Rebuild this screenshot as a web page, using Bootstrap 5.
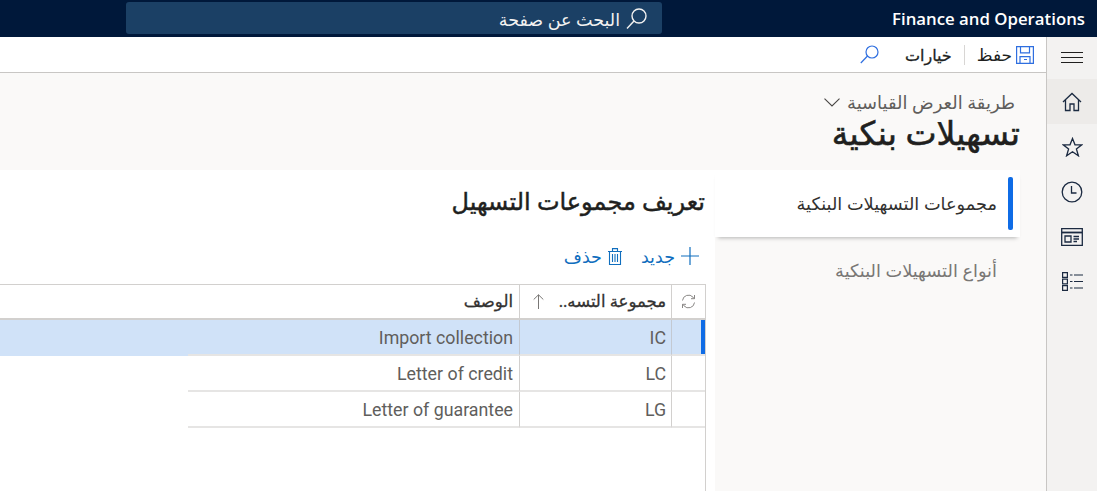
<!DOCTYPE html>
<html lang="ar" dir="rtl">
<head>
    <meta charset="UTF-8">
    <meta name="viewport" content="width=device-width, initial-scale=1.0">
    <title>تسهيلات بنكية</title>
    <link href="https://cdn.jsdelivr.net/npm/bootstrap@5.3.0/dist/css/bootstrap.min.css" rel="stylesheet">
    <style>
        html, body { height: 491px; overflow: hidden; }
        body { font-family: "Open Sans", "DejaVu Sans", sans-serif; font-size: 14px; color: #323130; background: #fff; }
        svg { display: block; flex: none; }

        .top-bar { height: 37px; background: #00183a; color: #fff; }
        .brand-box { width: 435px; padding-right: 12px; font-weight: 600; font-size: 16.8px; line-height: 37px; flex: none; text-align: right; }
        .search-box { width: 536px; height: 32px; margin-top: 2px; background: #1b4065; border-radius: 3px; padding-right: 15px; gap: 6px; font-size: 17.5px; color: #f3f2f1; }
        .search-box span { padding-top: 2px; }

        .app-body { height: 454px; }
        .side-rail { width: 51px; flex: none; background: #f3f2f1; border-left: 1px solid #c8c6c4; }
        .rail-item { height: 45px; }
        .rail-first { height: 42px; }
        .rail-on { background: #edebe9; }

        .work-area { min-width: 0; background: #faf9f8; }
        .tool-bar { height: 36px; background: #fff; border-bottom: 1px solid #c8c6c4; padding-right: 12px; font-size: 17px; }
        .tool-item { gap: 4px; color: #201f1e; }
        .tool-sep { width: 1px; height: 20px; background: #d8d6d4; margin: 0 12px; }
        .tool-strong { font-size: 16px; color: #201f1e; -webkit-text-stroke: .3px #201f1e; }
        .tool-find { margin-right: 26px; }

        .page-head { height: 97px; padding: 16px 31px 0 0; }
        .view-name { font-size: 17.9px; line-height: 26px; color: #605e5c; gap: 7px; }
        .page-title { font-size: 33px; font-weight: 400; -webkit-text-stroke: .6px #201f1e; line-height: 36px; margin: 0 -5px 0 0; color: #201f1e; }

        .tabs-wrap { height: 321px; margin-right: 26px; }
        .tab-col { width: 305px; flex: none; }
        .tab-link { height: 67px; line-height: 67px; padding-right: 23px; font-size: 17.75px; color: #797775; position: relative; }
        .tab-on { background: #fff; color: #323130; box-shadow: 0 4px 4px -3px rgba(0,0,0,.28); }
        .tab-on::before { content: ""; position: absolute; right: 7px; top: 7px; bottom: 7px; width: 5px; background: #0f6ce6; border-radius: 2px; }
        .tab-off { height: 66px; line-height: 66px; }

        .tab-body { min-width: 0; background: #fff; }
        .body-title { font-size: 24px; font-weight: 400; -webkit-text-stroke: .45px #201f1e; line-height: 30px; padding: 16px 10px 0 0; margin: 0; color: #201f1e; }
        .action-bar { height: 38px; margin-top: 21px; padding-right: 16px; color: #106ebe; font-size: 17.5px; }
        .action-item { gap: 6px; }
        .action-del { margin-right: 19px; }

        .data-grid { margin-right: 9px; margin-top: 9px; height: 207px; border-right: 1px solid #d2d0ce; border-top: 1px solid #d2d0ce; overflow: hidden; }
        .grid-row { height: 36px; }
        .grid-head { height: 35px; border-bottom: 2px solid #d2d0ce; font-size: 16.5px; -webkit-text-stroke: .3px #323130; color: #323130; }
        .cell-sel { width: 34px; flex: none; border-left: 1px solid #d2d0ce; position: relative; }
        .cell-code { width: 152px; flex: none; border-left: 1px solid #d2d0ce; padding: 0 5px 0 7px; }
        .cell-desc { width: 331px; flex: none; padding: 0 6px; }
        .cell-fill { flex: 1 1 auto; }
        .row-line .cell-sel, .row-line .cell-code, .row-line .cell-desc { border-bottom: 2px solid #e6e5e4; }
        .row-text { font-family: Roboto, sans-serif; font-size: 17.8px; color: #605e5c; line-height: 36px; text-align: right; }
        .row-on { background: #d0e2f8; }
        .row-on .cell-sel, .row-on .cell-code { border-left-color: #c3c9d2; }
        .row-on .cell-sel::before { content: ""; position: absolute; right: 0; top: 0; bottom: 0; width: 4px; background: #0f6ce6; }
        .sort-arrow { margin-right: auto; margin-left: 6px; -webkit-text-stroke: 0; }
    </style>
</head>
<body>
<div class="top-bar d-flex">
    <div class="brand-box" dir="ltr">Finance and Operations</div>
    <div class="search-box d-flex align-items-center">
        <svg width="21" height="21" viewBox="0 0 21 21" fill="none" stroke="#f3f2f1" stroke-width="1.400"><circle cx="13" cy="8" r="7"/><path d="M8 13 1 20.500"/></svg>
        <span>البحث عن صفحة</span>
    </div>
</div>

<div class="app-body d-flex">
    <div class="side-rail d-flex flex-column">
        <div class="rail-item rail-first d-flex align-items-center justify-content-center">
            <svg width="22" height="12" viewBox="0 0 22 12" stroke="#201f1e"><path d="M0 .5h22M0 5.500h22M0 10.500h22"/></svg>
        </div>
        <div class="rail-item rail-on d-flex align-items-center justify-content-center">
            <svg width="20" height="20" viewBox="0 0 20 20" fill="none" stroke="#1b2a41" stroke-width="1.300"><path d="M1 10 10 1.500 19 10M3.500 8v10.500h4.500v-6.500h4v6.500h4.500V8"/></svg>
        </div>
        <div class="rail-item d-flex align-items-center justify-content-center">
            <svg width="21" height="20" viewBox="0 0 21 20" fill="none" stroke="#1b2a41" stroke-width="1.300"><path d="M10.500 1.500 13 7.800h6.800l-5.400 4.200 2 6.800-5.900-4-5.900 4 2-6.800-5.400-4.200H8z"/></svg>
        </div>
        <div class="rail-item d-flex align-items-center justify-content-center">
            <svg width="22" height="22" viewBox="0 0 22 22" fill="none" stroke="#1b2a41" stroke-width="1.300"><circle cx="11" cy="11" r="9.800"/><path d="M10.500 5v7h5"/></svg>
        </div>
        <div class="rail-item d-flex align-items-center justify-content-center">
            <svg width="22" height="18" viewBox="0 0 22 18" fill="none" stroke="#1b2a41" stroke-width="1.300"><path d="M.7.700h20.600v16.600H.7z"/><path d="M1 4.500h20" stroke-width="1.800"/><path d="M4 8h6v6H4zM12.500 8.500H18M12.500 11H18M12.500 13.500H16"/></svg>
        </div>
        <div class="rail-item d-flex align-items-center justify-content-center">
            <svg width="21" height="19" viewBox="0 0 21 19" fill="none" stroke="#1b2a41" stroke-width="1.200"><path d="M.6.600h4.800v4.800H.6zM.6 7.100h4.800v4.800H.6zM.6 13.600h4.800v4.800H.6zM8 3h2.500M12 3h9M8 9.500h2.500M12 9.500h9M8 16h2.500M12 16h9"/></svg>
        </div>
    </div>

    <div class="work-area flex-grow-1 d-flex flex-column">
        <div class="tool-bar d-flex align-items-center">
            <div class="tool-item d-flex align-items-center">
                <svg width="18" height="18" viewBox="0 0 18 18" fill="none" stroke="#2f6fe0" stroke-width="1.200"><path d="M.6.600h16.800v16.800H.6z"/><path d="M4.500.800v6h9v-6M4 17.200v-6.500h10v6.500M8 13.500h3"/></svg>
                <span>حفظ</span>
            </div>
            <div class="tool-sep"></div>
            <span class="tool-strong">خيارات</span>
            <svg class="tool-find" width="19" height="19" viewBox="0 0 19 19" fill="none" stroke="#2f6fe0" stroke-width="1.200"><circle cx="12" cy="7" r="6"/><path d="M7.500 11 .8 18"/></svg>
        </div>

        <div class="page-head">
            <div class="view-name d-flex align-items-center">
                <span>طريقة العرض القياسية</span>
                <svg width="16" height="9" viewBox="0 0 16 9" fill="none" stroke="#484644" stroke-width="1.100"><path d="M.5.700 8 8 15.500.7"/></svg>
            </div>
            <h1 class="page-title">تسهيلات بنكية</h1>
        </div>

        <div class="tabs-wrap d-flex">
            <div class="tab-col nav flex-column">
                <div class="tab-link tab-on">مجموعات التسهيلات البنكية</div>
                <div class="tab-link tab-off">أنواع التسهيلات البنكية</div>
            </div>
            <div class="tab-body flex-grow-1">
                <h2 class="body-title">تعريف مجموعات التسهيل</h2>
                <div class="action-bar d-flex align-items-center">
                    <div class="action-item d-flex align-items-center">
                        <svg width="18" height="18" viewBox="0 0 18 18" stroke="#106ebe" stroke-width="1.200"><path d="M9 0v18M0 9h18"/></svg>
                        <span>جديد</span>
                    </div>
                    <div class="action-item action-del d-flex align-items-center">
                        <svg width="14" height="17" viewBox="0 0 14 17" fill="none" stroke="#106ebe" stroke-width="1.100"><path d="M1.500 3.500h11v13h-11zM0 3.500h14M4.500 3.500V.6h5v2.900M4.500 6v8M7 6v8M9.500 6v8"/></svg>
                        <span>حذف</span>
                    </div>
                </div>

                <div class="data-grid">
                    <div class="grid-head d-flex">
                        <div class="cell-sel d-flex align-items-center justify-content-center">
                            <svg width="15" height="15" viewBox="0 0 15 15" fill="none" stroke="#8a8886"><path d="M1.500 6.500A6 6 0 0 1 12 3.200l1.500 1.500M13.500 8.500A6 6 0 0 1 3 11.800l-1.500-1.500M13.500 1v3.700H10M1.500 14v-3.700H5"/></svg>
                        </div>
                        <div class="cell-code d-flex align-items-center">
                            <span>مجموعة التسه..</span>
                            <svg class="sort-arrow" width="11" height="15" viewBox="0 0 11 15" fill="none" stroke="#797775"><path d="M5.500 15V.8M.7 5.500 5.500.8l4.800 4.700"/></svg>
                        </div>
                        <div class="cell-desc d-flex align-items-center"><span>الوصف</span></div>
                        <div class="cell-fill"></div>
                    </div>
                    <div class="grid-row row-line row-on d-flex">
                        <div class="cell-sel"></div>
                        <div class="cell-code row-text" dir="ltr">IC</div>
                        <div class="cell-desc row-text" dir="ltr">Import collection</div>
                        <div class="cell-fill"></div>
                    </div>
                    <div class="grid-row row-line d-flex">
                        <div class="cell-sel"></div>
                        <div class="cell-code row-text" dir="ltr">LC</div>
                        <div class="cell-desc row-text" dir="ltr">Letter of credit</div>
                        <div class="cell-fill"></div>
                    </div>
                    <div class="grid-row row-line d-flex">
                        <div class="cell-sel"></div>
                        <div class="cell-code row-text" dir="ltr">LG</div>
                        <div class="cell-desc row-text" dir="ltr">Letter of guarantee</div>
                        <div class="cell-fill"></div>
                    </div>
                </div>
            </div>
        </div>
    </div>
</div>
<script src="https://cdn.jsdelivr.net/npm/bootstrap@5.3.0/dist/js/bootstrap.bundle.min.js"></script>
</body>
</html>
